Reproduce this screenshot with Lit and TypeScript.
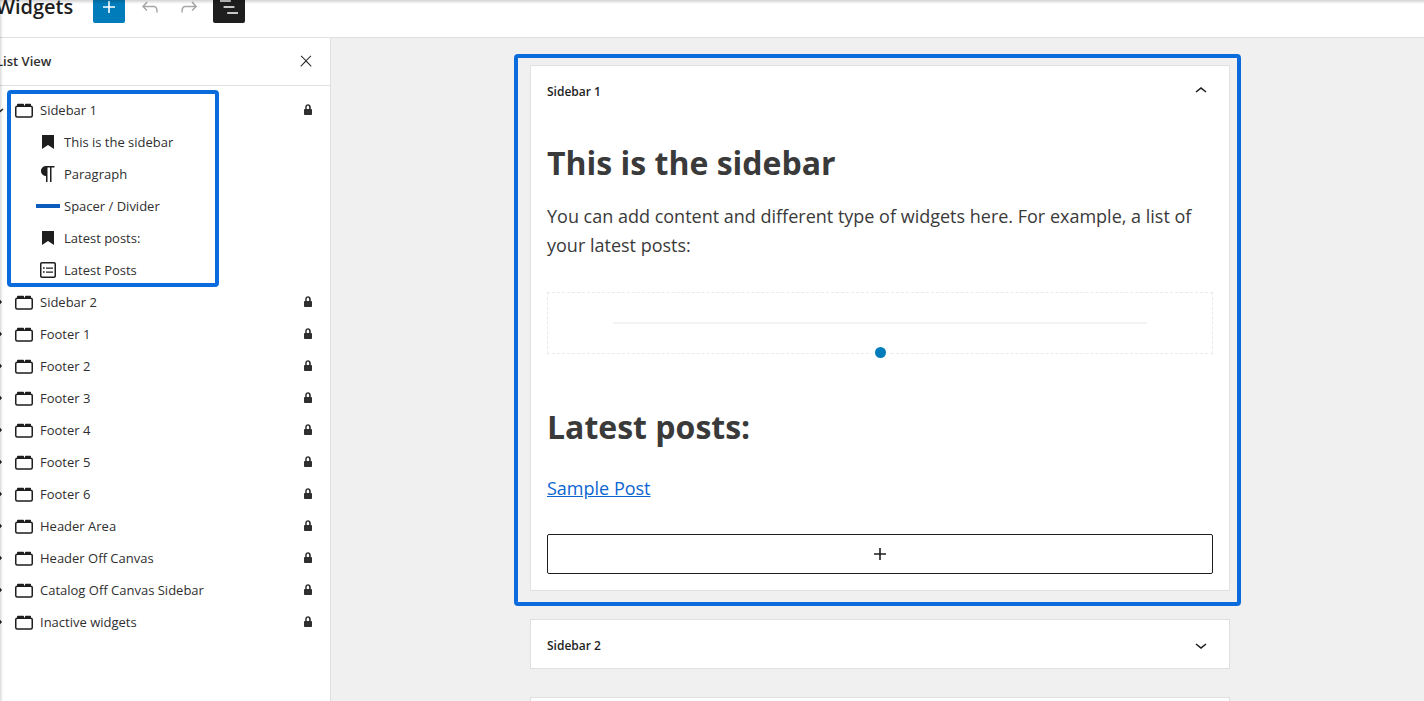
import { LitElement, html, css, svg } from 'lit';
import { customElement } from 'lit/decorators.js';

const icon = (d: unknown, cls = '') =>
  html`<svg class="icon ${cls}" viewBox="0 0 24 24" width="24" height="24" aria-hidden="true">${d}</svg>`;

const plus = svg`<path d="M18 11.2h-5.2V6h-1.6v5.2H6v1.6h5.2V18h1.6v-5.2H18z" />`;
const undo = svg`<path d="M18.3 11.7c-.6-.6-1.4-.9-2.3-.9H6.7l2.9-3.3-1.1-1-4.5 5L8.5 16l1-1-2.7-2.7H16c.5 0 .9.2 1.3.5 1 1 1 3.4 1 4.5v.3h1.5v-.2c0-1.5 0-4.3-1.5-5.7z" />`;
const redo = svg`<path d="M15.6 6.5l-1.1 1 2.9 3.3H8c-.9 0-1.7.3-2.3.9-1.4 1.5-1.4 4.2-1.4 5.6v.2h1.5v-.3c0-1.1 0-3.5 1-4.5.3-.3.7-.5 1.3-.5h9.2L14.5 15l1.1 1.1 4.6-4.6-4.6-5z" />`;
const listView = svg`<path d="M13.8 5.2H3v1.5h10.8V5.2zm-3.6 12v1.5H21v-1.5H10.2zm7.2-6H6.6v1.5h10.8v-1.5z" />`;
const close = svg`<path d="M13 11.8l6.1-6.3-1-1-6.1 6.2-6.1-6.2-1 1 6.1 6.3-6.5 6.7 1 1 6.5-6.6 6.5 6.6 1-1z" />`;
const lock = svg`<path d="M15 11h-.2V9c0-1.5-1.2-2.8-2.8-2.8S9.2 7.5 9.2 9v2H9c-.6 0-1 .4-1 1v4c0 .6.4 1 1 1h6c.6 0 1-.4 1-1v-4c0-.6-.4-1-1-1zm-1.8 0h-2.5V9c0-.7.6-1.2 1.2-1.2s1.2.6 1.2 1.2v2z" />`;
const chevronUp = svg`<path d="M6.5 12.4L12 8l5.5 4.4-.9 1.2L12 10l-4.5 3.6-1-1.2z" />`;
const chevronDown = svg`<path d="M17.5 11.6L12 16l-5.5-4.4.9-1.2L12 14l4.5-3.6 1 1.2z" />`;
const chevronRight = svg`<path d="M10.6 6L9.4 7l4.6 5-4.6 5 1.2 1 5.4-6z" />`;
const widgetArea = svg`
  <path d="M5 8.5V6.5c0-.4.3-.7.7-.7h5.6c.4 0 .7.3.7.7v2zM13 8.5V6.5c0-.4.3-.7.7-.7h4.6c.4 0 .7.3.7.7v2z" />
  <rect x="3.75" y="8.25" width="16.5" height="10.75" rx="1.5" fill="none" stroke="currentColor" stroke-width="1.5" />`;
const bookmark = svg`<path d="M6 5h12v14l-6-4-6 4z" />`;
const paragraph = svg`<path d="m9.99609 14v-.2251l.00391.0001v6.225h1.5v-14.5h2.5v14.5h1.5v-14.5h3v-1.5h-8.50391c-2.76142 0-5 2.23858-5 5 0 2.7614 2.23858 5 5 5z" />`;
const divider = svg`<rect x="0" y="10" width="24" height="4" fill="#0a5cbd" />`;
const postList = svg`<path d="M18 4H6c-1.1 0-2 .9-2 2v12c0 1.1.9 2 2 2h12c1.1 0 2-.9 2-2V6c0-1.1-.9-2-2-2zm.5 14c0 .3-.2.5-.5.5H6c-.3 0-.5-.2-.5-.5V6c0-.3.2-.5.5-.5h12c.3 0 .5.2.5.5v12zM7 10.8h1.6V9.2H7v1.6zm0 4h1.6v-1.6H7v1.6zm3-4h7V9.4h-7v1.4zm0 4h7v-1.4h-7v1.4z" />`;

const children = [
  { label: 'This is the sidebar', glyph: bookmark },
  { label: 'Paragraph', glyph: paragraph },
  { label: 'Spacer / Divider', glyph: divider },
  { label: 'Latest posts:', glyph: bookmark },
  { label: 'Latest Posts', glyph: postList },
];

const areas = [
  'Sidebar 2',
  'Footer 1',
  'Footer 2',
  'Footer 3',
  'Footer 4',
  'Footer 5',
  'Footer 6',
  'Header Area',
  'Header Off Canvas',
  'Catalog Off Canvas Sidebar',
  'Inactive widgets',
];

@customElement('app-root')
export class AppRoot extends LitElement {
  static styles = css`
    :host {
      display: block;
      position: relative;
      width: 1424px;
      height: 701px;
      overflow: hidden;
      background: #fff;
      color: #1e1e1e;
      font-family: 'Open Sans', 'Noto Sans', sans-serif;
    }
    .icon {
      display: block;
      flex: none;
      fill: currentColor;
    }
    .topbar {
      box-sizing: border-box;
      height: 38px;
      display: flex;
      align-items: flex-start;
      border-bottom: 1px solid #e0e0e0;
      overflow: hidden;
    }
    .topbar-inner {
      display: flex;
      align-items: center;
      height: 32px;
      margin-top: -9px;
    }
    .title {
      flex: 0 0 97px;
      margin: 0 0 0 -4px;
      font-size: 20px;
      font-weight: 600;
      line-height: 32px;
    }
    .tool {
      width: 32px;
      height: 32px;
      display: flex;
      align-items: center;
      justify-content: center;
      border-radius: 2px;
      flex: none;
    }
    .tool.add {
      background: #007cba;
      color: #fff;
      margin-right: 5px;
    }
    .tool.history {
      color: #a7a7a7;
      width: 39px;
    }
    .tool.toggle {
      background: #1e1e1e;
      color: #fff;
      margin-left: 5px;
    }
    .body {
      display: flex;
      height: 663px;
    }
    .panel {
      box-sizing: border-box;
      width: 331px;
      flex: none;
      border-right: 1px solid #e0e0e0;
      background: #fff;
    }
    .panel-head {
      box-sizing: border-box;
      height: 48px;
      display: flex;
      align-items: center;
      justify-content: space-between;
      padding: 0 15px 1px 0;
      border-bottom: 1px solid #e0e0e0;
      font-size: 13px;
      font-weight: 600;
      color: #2f2f2f;
    }
    .panel-head span {
      margin-left: -4px;
    }
    .panel-head .icon {
      width: 18px;
      height: 18px;
    }
    .tree {
      position: relative;
      padding-top: 8px;
    }
    .row {
      height: 32px;
      display: flex;
      align-items: center;
      font-size: 13px;
      color: #2f2f2f;
      padding-right: 10px;
    }
    .row .expander {
      margin-left: -14px;
      margin-right: 2px;
      color: #1e1e1e;
    }
    .row .area {
      color: #1e1e1e;
      margin-right: 4px;
    }
    .row .label {
      flex: 1;
      white-space: nowrap;
    }
    .row.child {
      padding-left: 36px;
    }
    .row.child .icon {
      margin-right: 4px;
      color: #1e1e1e;
    }
    .tree-mark {
      position: absolute;
      left: 7px;
      top: 4px;
      width: 212px;
      height: 197px;
      box-sizing: border-box;
      border: 4px solid #0a6cdc;
      border-radius: 4px;
      pointer-events: none;
    }
    .canvas {
      flex: 1;
      background: #f0f0f0;
      padding: 27px 0 0 199px;
      overflow: hidden;
    }
    .card {
      box-sizing: border-box;
      width: 700px;
      background: #fff;
      border: 1px solid #e0e0e0;
      position: relative;
    }
    .card + .card {
      margin-top: 28px;
    }
    .card-mark {
      position: absolute;
      left: -17px;
      top: -12px;
      right: -12px;
      bottom: -16px;
      border: 4px solid #0a6cdc;
      border-radius: 4px;
      pointer-events: none;
    }
    .card-head {
      box-sizing: border-box;
      height: 48px;
      display: flex;
      align-items: center;
      justify-content: space-between;
      padding: 2px 16px 0;
      font-size: 12px;
      font-weight: 600;
    }
    .card-body {
      box-sizing: border-box;
      height: 476px;
      padding: 0 16px;
      color: #3a3a3a;
    }
    h2 {
      margin: 0;
      font-size: 32px;
      font-weight: 700;
      line-height: 44px;
    }
    .first {
      padding-top: 27px;
    }
    p {
      margin: 17px 0 0;
      font-size: 18px;
      line-height: 29px;
    }
    .spacer {
      box-sizing: border-box;
      height: 62px;
      margin-top: 32px;
      border: 1px dashed #eaeaea;
      padding-top: 29px;
      position: relative;
    }
    .rule {
      height: 2px;
      margin: 0 65px;
      background: #f3f3f3;
    }
    .handle {
      position: absolute;
      left: 327px;
      bottom: -5px;
      width: 11px;
      height: 11px;
      border-radius: 50%;
      background: #007cba;
      box-shadow: 0 0 0 4px #fff;
    }
    .second {
      margin-top: 51px;
    }
    .link {
      display: block;
      margin-top: 25px;
      font-size: 18px;
      line-height: 29px;
      color: #0e65d2;
      text-decoration: underline;
    }
    .appender {
      box-sizing: border-box;
      height: 40px;
      margin-top: 31px;
      border: 1px solid #1e1e1e;
      border-radius: 2px;
      display: flex;
      align-items: center;
      justify-content: center;
      color: #1e1e1e;
    }
    .edge-top,
    .edge-left {
      position: absolute;
      left: 0;
      top: 0;
      pointer-events: none;
    }
    .edge-top {
      width: 100%;
      height: 4px;
      background: linear-gradient(rgba(0, 0, 0, 0.17), rgba(0, 0, 0, 0));
    }
    .edge-left {
      width: 3px;
      height: 100%;
      background: linear-gradient(to right, rgba(0, 0, 0, 0.14), rgba(0, 0, 0, 0));
    }
  `;

  private renderArea(label: string, glyph: unknown = chevronRight) {
    return html`
      <div class="row">
        ${icon(glyph, 'expander')} ${icon(widgetArea, 'area')}
        <span class="label">${label}</span>
        ${icon(lock)}
      </div>
    `;
  }

  render() {
    return html`
      <header class="topbar">
        <div class="topbar-inner">
          <h1 class="title">Widgets</h1>
          <div class="tool add">${icon(plus)}</div>
          <div class="tool history">${icon(undo)}</div>
          <div class="tool history">${icon(redo)}</div>
          <div class="tool toggle">${icon(listView)}</div>
        </div>
      </header>
      <div class="body">
        <aside class="panel">
          <div class="panel-head"><span>List View</span>${icon(close)}</div>
          <div class="tree">
            ${this.renderArea('Sidebar 1', chevronDown)}
            ${children.map(
              (c) => html`<div class="row child">${icon(c.glyph)}<span class="label">${c.label}</span></div>`
            )}
            ${areas.map((a) => this.renderArea(a))}
            <div class="tree-mark"></div>
          </div>
        </aside>
        <main class="canvas">
          <section class="card">
            <div class="card-head"><span>Sidebar 1</span>${icon(chevronUp)}</div>
            <div class="card-body">
              <h2 class="first">This is the sidebar</h2>
              <p>You can add content and different type of widgets here. For example, a list of your latest posts:</p>
              <div class="spacer">
                <div class="rule"></div>
                <div class="handle"></div>
              </div>
              <h2 class="second">Latest posts:</h2>
              <a class="link">Sample Post</a>
              <div class="appender">${icon(plus)}</div>
            </div>
            <div class="card-mark"></div>
          </section>
          <section class="card">
            <div class="card-head"><span>Sidebar 2</span>${icon(chevronDown)}</div>
          </section>
          <section class="card">
            <div class="card-head"></div>
          </section>
        </main>
      </div>
      <div class="edge-top"></div>
      <div class="edge-left"></div>
    `;
  }
}
